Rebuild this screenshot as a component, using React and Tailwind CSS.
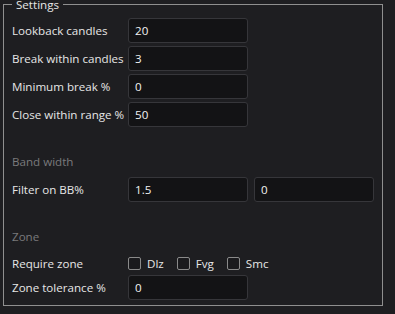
import React from "react";

const font = { fontFamily: '"Open Sans", "Noto Sans", sans-serif' };

function Field({ value, w = "w-[120px]" }) {
  return (
    <div className={`${w} h-[25px] flex items-center rounded-[3px] border border-[#36363a] bg-[#131315] pl-[6px] text-[11.6px] text-[#f2f2f2]`}>
      {value}
    </div>
  );
}

function Row({ label, children }) {
  return (
    <div className="flex items-center h-[25px]">
      <div className="w-[116px] text-[11.6px] text-[#e6e6e6] whitespace-nowrap">{label}</div>
      {children}
    </div>
  );
}

function Check({ label }) {
  return (
    <div className="flex items-center gap-[6px]">
      <div className="w-[13px] h-[13px] rounded-[2px] border border-[#8a8a8a] bg-[#1a1a1d]" />
      <span className="text-[11.6px] text-[#e6e6e6]">{label}</span>
    </div>
  );
}

export default function App() {
  return (
    <div className="w-[395px] h-[314px] bg-[#1e1e21] overflow-hidden" style={font}>
      <fieldset className="ml-[3px] -mt-[4px] w-[380px] border border-[#8f8f8f] pl-[8px] pr-[8px] pt-[5px] pb-[5px]">
        <legend className="px-1 text-[11.6px] leading-[17px] text-[#e6e6e6]">Settings</legend>
        <div className="flex flex-col gap-[3px]">
          <Row label="Lookback candles"><Field value="20" /></Row>
          <Row label="Break within candles"><Field value="3" /></Row>
          <Row label="Minimum break %"><Field value="0" /></Row>
          <Row label="Close within range %"><Field value="50" /></Row>
        </div>
        <div className="mt-[26px] h-[17px] flex items-center text-[11.6px] text-[#7a7a7c]">Band width</div>
        <div className="mt-[7px]">
          <Row label="Filter on BB%">
            <div className="flex gap-[6px]">
              <Field value="1.5" />
              <Field value="0" />
            </div>
          </Row>
        </div>
        <div className="mt-[26px] h-[17px] flex items-center text-[11.6px] text-[#7a7a7c]">Zone</div>
        <div className="mt-[7px] flex items-center h-[23px]">
          <div className="w-[116px] text-[11.6px] text-[#e6e6e6]">Require zone</div>
          <div className="flex items-center gap-[13px]">
            <Check label="Dlz" />
            <Check label="Fvg" />
            <Check label="Smc" />
          </div>
        </div>
        <Row label="Zone tolerance %"><Field value="0" /></Row>
      </fieldset>
    </div>
  );
}
